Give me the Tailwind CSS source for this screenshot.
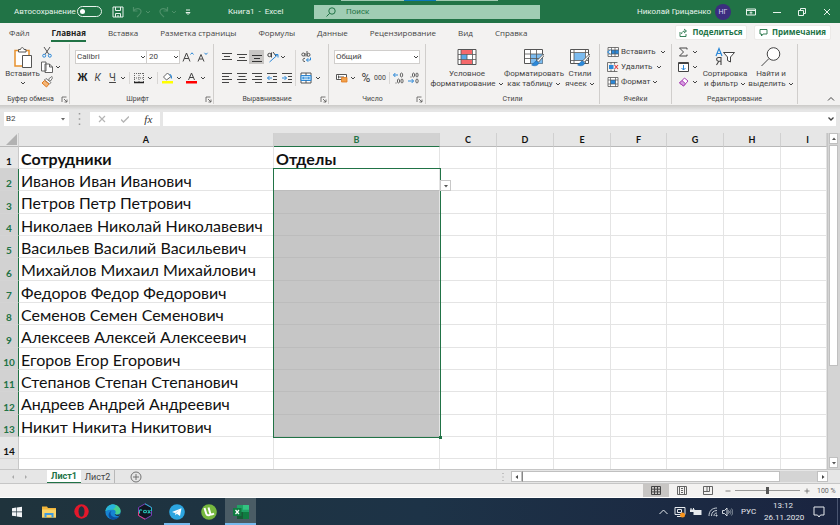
<!DOCTYPE html>
<html lang="ru">
<head>
<meta charset="utf-8">
<meta name="viewport" content="width=device-width, initial-scale=1">
<title>Книга1 - Excel</title>
<script src="https://cdn.jsdelivr.net/npm/@tailwindcss/browser@4"></script>
</head>
<body class="h-screen overflow-hidden flex flex-col bg-[#e6e6e6] font-['Roboto','Open_Sans',sans-serif] text-[8px] leading-[10px] text-[#444]">

<svg class="hidden">
  <symbol id="chev" viewBox="0 0 6 6"><path d="M1 2l2 2 2-2" fill="none" stroke="currentColor" stroke-width="1"/></symbol>
  <symbol id="launch" viewBox="0 0 7 7"><path d="M1 6V1h4.500M3 3l3 3M6 3.500V6H3.500" fill="none" stroke="#555" stroke-width=".8"/></symbol>
  <symbol id="brush" viewBox="0 0 12 12"><path d="M11.500 .5L5.500 6.500l1.500 1.500 5-6z" fill="#fff" stroke="#555" stroke-width=".8"/><path d="M5 7c-2 0-2 2.500-4.500 3.500C3 12 7 11.500 7 8.500z" fill="#2b88d8" stroke="#1e6bb0" stroke-width=".5"/></symbol>
</svg>

<!-- Title bar -->
<header class="relative h-[23px] shrink-0 flex items-center bg-[#217346] text-[#e8f3ec]">
  <div class="absolute top-0 left-[341px] w-[157px] h-px bg-[#9fc9b1]"><div class="ml-[63px] w-8 h-px bg-[#0a78b8]"></div></div>
  <label for="autosave" class="ml-[14px] w-[63px] text-[8px] whitespace-nowrap">Автосохранение</label>
  <input id="autosave" type="checkbox" class="peer sr-only">
  <label for="autosave" aria-hidden="true" class="w-[25px] h-[11px] rounded-full border border-[#e8f3ec] flex items-center pl-[2px]"><span class="size-[5px] rounded-full bg-white"></span></label>
  <button aria-label="Сохранить" class="ml-[10px] size-3"><svg viewBox="0 0 12 12" class="size-3" fill="none" stroke="#e8f3ec"><path d="M1 1h10v10H1zM3.500 1v3.500h5V1M3.500 11V7.500h5V11M6 9v2"/></svg></button>
  <button aria-label="Отменить" class="ml-2 w-3 h-3 text-[#4d9069]"><svg viewBox="0 0 12 12" class="size-3" fill="none" stroke="currentColor" stroke-width="1.200"><path d="M1.500 1v4h4M1.500 5c2-3.500 8-3 7.500 1-.2 2-2 3-4 5"/></svg></button>
  <svg class="ml-px size-[6px] text-[#4d9069]"><use href="#chev"/></svg>
  <button aria-label="Вернуть" class="ml-[6px] w-3 h-3 text-[#4d9069]"><svg viewBox="0 0 12 12" class="size-3" fill="none" stroke="currentColor" stroke-width="1.200"><path d="M10.500 1v4h-4M10.500 5c-2-3.500-8-3-7.500 1 .2 2 2 3 4 5"/></svg></button>
  <svg class="ml-[2px] size-[6px] text-[#4d9069]"><use href="#chev"/></svg>
  <button aria-label="Настройка панели" class="ml-[8px] w-[6px] h-[8px]"><svg viewBox="0 0 6 8" class="w-[6px] h-[8px]" fill="none" stroke="#e8f3ec"><path d="M1 2h4M1 4.500l2 2 2-2z"/></svg></button>
  <h1 class="ml-[37px] w-[86px] whitespace-nowrap">Книга1&nbsp; -&nbsp; Excel</h1>
  <div class="w-[226px] h-[14px] bg-[#a0cdb4] flex items-center pl-3 text-[#217346]">
    <svg viewBox="0 0 10 10" class="size-[10px]" fill="none" stroke="#217346"><circle cx="6" cy="4" r="3.200"/><path d="M3.700 6.300L.5 9.500"/></svg>
    <input aria-label="Поиск" placeholder="Поиск" class="ml-[10px] w-40 bg-transparent outline-none text-[8px] placeholder:text-[#217346]">
  </div>
  <span class="ml-auto w-[78px] whitespace-nowrap">Николай Грицаенко</span>
  <span class="size-4 rounded-full bg-[#3b2e7e] text-[#d8d4f0] text-[7px] grid place-items-center">НГ</span>
  <button aria-label="Параметры ленты" class="ml-[15px]"><svg viewBox="0 0 10 8" class="w-[10px] h-2" fill="none" stroke="#e8f3ec"><path d="M.5 1h9v6h-9zM.5 2.500h9M5 6.500V4M3.500 5.200L5 3.700l1.500 1.500"/></svg></button>
  <button aria-label="Свернуть" class="ml-[17px]"><svg viewBox="0 0 8 8" class="size-2" stroke="#e8f3ec"><path d="M0 4.500h8"/></svg></button>
  <button aria-label="Свернуть в окно" class="ml-[17px]"><svg viewBox="0 0 8 8" class="size-2" fill="none" stroke="#e8f3ec"><path d="M.5 2.500h5v5h-5zM2.500 2V.5h5v5H6"/></svg></button>
  <button aria-label="Закрыть" class="ml-[17px] mr-[9px]"><svg viewBox="0 0 8 8" class="size-2" stroke="#e8f3ec"><path d="M1 1l6 6M7 1L1 7"/></svg></button>
</header>

<!-- Ribbon tabs -->
<nav class="h-5 shrink-0 flex items-center gap-[22px] pl-[9px] bg-[#f3f2f1] font-['Open_Sans','Noto_Sans',sans-serif] text-[8px] leading-[12px] whitespace-nowrap">
  <a href="#">Файл</a>
  <a href="#" class="font-bold text-[#222] h-[17px] pt-[2px] border-b-2 border-[#217346]">Главная</a>
  <a href="#">Вставка</a>
  <a href="#">Разметка страницы</a>
  <a href="#">Формулы</a>
  <a href="#">Данные</a>
  <a href="#">Рецензирование</a>
  <a href="#">Вид</a>
  <a href="#">Справка</a>
  <div class="ml-auto mr-[9px] -mt-[2px] flex gap-[7px] font-bold text-[#217346]">
    <button class="h-[15px] w-[72px] bg-white rounded-xs flex items-center justify-center gap-1 border border-[#eceae8]"><svg viewBox="0 0 9 9" class="size-[9px]" fill="none" stroke="#217346" stroke-width=".9"><path d="M1 4v4.500h6V6M2.500 6c.3-2.500 2-3 4-3M5 1l2.500 2L5 5"/></svg>Поделиться</button>
    <button class="h-[15px] w-[77px] bg-white rounded-xs flex items-center justify-center gap-1 border border-[#eceae8]"><svg viewBox="0 0 9 9" class="size-[9px]" fill="none" stroke="#217346" stroke-width=".9"><path d="M1 1.500h7v4.500H4L2.500 8V6H1z"/></svg>Примечания</button>
  </div>
</nav>

<!-- Ribbon -->
<div class="h-[62px] shrink-0 flex bg-[#f3f2f1] pt-px pb-[1px] whitespace-nowrap">
  <section class="w-[70px] border-r border-[#d0cecc] flex flex-col">
    <div class="flex h-[50px] pt-[3px] pl-[6px]">
      <button class="w-[33px] flex flex-col items-center">
        <svg viewBox="0 0 20 22" class="w-5 h-[22px] shrink-0" fill="none"><path d="M2 3.500h14v15.500H2z" fill="#fff" stroke="#e8912d" stroke-width="1.500"/><path d="M5.500 5V2.500h2C8 0 10.500 0 11 2.500h2V5z" fill="#fff" stroke="#555"/><path d="M9.500 8.500h9v12h-9z" fill="#fff" stroke="#555"/></svg>
        <span>Вставить</span>
        <svg class="size-[6px] mt-px"><use href="#chev"/></svg>
      </button>
      <div class="ml-[2px] flex flex-col gap-[3px]">
        <button aria-label="Вырезать" class="h-[11px] w-3"><svg viewBox="0 0 12 11" class="w-3 h-[11px]" fill="none"><path d="M3 0l5 7.500M9 0L4 7.500" stroke="#555"/><circle cx="3.200" cy="8.700" r="1.500" stroke="#2b88d8"/><circle cx="8.800" cy="8.700" r="1.500" stroke="#2b88d8"/></svg></button>
        <button aria-label="Копировать" class="h-[12px] flex items-center gap-[2px]"><svg viewBox="0 0 12 12" class="size-3" fill="#fff" stroke="#555" stroke-width=".9"><path d="M.5 1H5v9H.5zM4 3h4.500l3 3v5.500H4zM8.500 3v3h3"/></svg><svg class="size-[6px]"><use href="#chev"/></svg></button>
        <button aria-label="Формат по образцу" class="h-3 w-3"><svg viewBox="0 0 12 12" class="size-3"><path d="M7.500 3L11 .5l.8 1L9.500 5z" fill="#fff" stroke="#555" stroke-width=".8"/><path d="M5 2.500l5 4-1.500 1.500-5-4z" fill="#fff" stroke="#555" stroke-width=".8"/><path d="M3.500 4.500L1 7l4.500 4L8 8z" fill="#f4b678" stroke="#e07a1f"/></svg></button>
      </div>
    </div>
    <div class="flex items-center mt-[1px] text-[7px]"><span class="flex-1 text-center">Буфер обмена</span><svg class="size-[7px] mr-px"><use href="#launch"/></svg></div>
  </section>

  <section class="w-[144px] border-r border-[#d0cecc] flex flex-col">
    <div class="h-[50px] pt-[6px] pl-[5px]">
      <div class="flex items-center h-[14px] text-[#444]">
        <div class="relative"><select aria-label="Шрифт" class="appearance-none block w-[72px] h-[14px] bg-white border border-[#d0cecc] pl-px text-[8px]"><option>Calibri</option></select><svg class="absolute right-px top-1 size-[6px] pointer-events-none"><use href="#chev"/></svg></div>
        <div class="relative -ml-px"><select aria-label="Размер шрифта" class="appearance-none block w-[34px] h-[14px] bg-white border border-[#d0cecc] pl-[2px] text-[8px]"><option>20</option></select><svg class="absolute right-px top-1 size-[6px] pointer-events-none"><use href="#chev"/></svg></div>
        <button aria-label="Увеличить размер" class="ml-[2px] w-[13px] h-3"><svg viewBox="0 0 13 12" class="w-[13px] h-3" fill="none"><path d="M1 10.500L4.500 2 8 10.500M2.300 7.500h4.500" stroke="#444"/><path d="M8.500 3.500l1.500-1.700 1.500 1.700" stroke="#2b88d8"/></svg></button>
        <button aria-label="Уменьшить размер" class="ml-[2px] w-[13px] h-3"><svg viewBox="0 0 13 12" class="w-[13px] h-3" fill="none"><path d="M1 10.500L4 3.500l3 7M2.200 8h3.600" stroke="#444"/><path d="M7.500 1.800L9 3.500l1.500-1.700" stroke="#2b88d8"/></svg></button>
      </div>
      <div class="mt-[7px] flex items-center h-[14px] text-[10px]">
        <button class="w-[15px] font-bold text-[#222]">Ж</button>
        <button class="w-[15px] italic">К</button>
        <button class="w-[15px] underline">Ч</button>
        <svg class="size-[6px] mr-[3px]"><use href="#chev"/></svg>
        <span class="w-px h-3 bg-[#d8d6d4] mr-[3px]"></span>
        <button aria-label="Границы" class="w-[12px]"><svg viewBox="0 0 12 12" class="size-3" fill="none" stroke="#666"><path d="M1 1.500h10M1.500 1v9M10.500 1v9M6 1v9M1 6h10" stroke-dasharray="1 1"/><path d="M1 10.500h10" stroke="#222" stroke-width="1.500"/></svg></button>
        <svg class="size-[6px] ml-[2px]"><use href="#chev"/></svg>
        <span class="w-px h-3 bg-[#d8d6d4] mx-1"></span>
        <button aria-label="Цвет заливки" class="w-[11px]"><svg viewBox="0 0 11 12" class="w-[11px] h-3" fill="none"><path d="M5.500 1L1.500 5l3 3L9 4.500z" fill="#fff" stroke="#555" stroke-width=".9"/><path d="M7.500 2.500c2 0 2 2 2 4" stroke="#2b88d8" stroke-width="1.200"/><path d="M0 9h11v2.500H0z" fill="#ff0"/></svg></button>
        <svg class="size-[6px] ml-[3px] mr-[4px]"><use href="#chev"/></svg>
        <button aria-label="Цвет текста" class="w-[11px]"><svg viewBox="0 0 11 12" class="w-[11px] h-3" fill="none"><path d="M2.500 8L5.500 1l3 7M3.500 5.500h4" stroke="#444"/><path d="M0 9h11v2.500H0z" fill="red"/></svg></button>
        <svg class="size-[6px] ml-[3px]"><use href="#chev"/></svg>
      </div>
    </div>
    <div class="flex items-center mt-[1px] text-[7px]"><span class="flex-1 text-center">Шрифт</span><svg class="size-[7px] mr-px"><use href="#launch"/></svg></div>
  </section>

  <section class="w-[115px] border-r border-[#d0cecc] flex flex-col">
    <div class="h-[50px] pt-[6px] pl-[5px] flex">
      <div class="w-[77px] border-r border-[#d8d6d4] h-[36px]">
        <div class="flex items-center h-[14px]">
          <button aria-label="По верхнему краю" class="w-[15px] grid place-items-center"><svg viewBox="0 0 10 10" class="size-[10px]" stroke="#444"><path d="M0 1.500h10M2 4.500h6M0 7.500h10"/></svg></button>
          <button aria-label="По середине" class="w-[15px] grid place-items-center"><svg viewBox="0 0 10 10" class="size-[10px]" stroke="#444"><path d="M0 2.500h10M2 5.500h6M0 8.500h10"/></svg></button>
          <button aria-label="По нижнему краю" class="w-[15px] h-[14px] bg-[#c8c6c4] grid place-items-center"><svg viewBox="0 0 10 10" class="size-[10px]" stroke="#333"><path d="M0 3.500h10M2 6.500h6M0 9.500h10"/></svg></button>
          <button aria-label="Ориентация" class="ml-[3px] w-3"><svg viewBox="0 0 12 12" class="size-3" fill="none"><circle cx="2.500" cy="4" r="1.700" stroke="#444"/><path d="M4.500 1.500v5M6 1l3 4" stroke="#444"/><path d="M2.500 11L11 3.500M7.800 3.500H11v3" stroke="#2b88d8"/></svg></button>
          <svg class="size-[6px] ml-px"><use href="#chev"/></svg>
        </div>
        <div class="mt-[7px] flex items-center h-[14px]">
          <button aria-label="По левому краю" class="w-[15px] grid place-items-center"><svg viewBox="0 0 10 10" class="size-[10px]" stroke="#444"><path d="M0 .5h10M0 3.500h7M0 6.500h10M0 9.500h7"/></svg></button>
          <button aria-label="По центру" class="w-[15px] grid place-items-center"><svg viewBox="0 0 10 10" class="size-[10px]" stroke="#444"><path d="M0 .5h10M1.500 3.500h7M0 6.500h10M1.500 9.500h7"/></svg></button>
          <button aria-label="По правому краю" class="w-[15px] grid place-items-center"><svg viewBox="0 0 10 10" class="size-[10px]" stroke="#444"><path d="M0 .5h10M3 3.500h7M0 6.500h10M3 9.500h7"/></svg></button>
          <button aria-label="Уменьшить отступ" class="w-[15px] grid place-items-center"><svg viewBox="0 0 10 10" class="size-[10px]" fill="none" stroke="#444"><path d="M0 .5h10M6 3.500h4M6 6.500h4M0 9.500h10"/><path d="M5 5H.5M2.500 3l-2 2 2 2" stroke="#2b88d8"/></svg></button>
          <button aria-label="Увеличить отступ" class="w-[15px] grid place-items-center"><svg viewBox="0 0 10 10" class="size-[10px]" fill="none" stroke="#444"><path d="M0 .5h10M6 3.500h4M6 6.500h4M0 9.500h10"/><path d="M0 5h4.500M2.500 3l2 2-2 2" stroke="#2b88d8"/></svg></button>
        </div>
      </div>
      <div class="pl-1">
        <button aria-label="Переносить текст" class="flex items-center h-[14px] pl-px"><svg viewBox="0 0 11 12" class="w-[11px] h-3" fill="none"><circle cx="2.300" cy="3.500" r="1.500" stroke="#555"/><path d="M4 2v3.500M6 0v5.500" stroke="#555"/><circle cx="7.500" cy="3.800" r="1.500" stroke="#555"/><path d="M4 7.500C1.500 6.500 1 11 4 10.500" stroke="#555"/><path d="M9.500 6.500v2.500H5.500M7.200 7.200L5.500 9l1.700 1.800" stroke="#2b88d8"/></svg></button>
        <button aria-label="Объединить" class="mt-[7px] flex items-center h-[14px] gap-[3px]"><svg viewBox="0 0 12 12" class="size-3" fill="none"><path d="M1 1h10v10H1z" fill="#fff" stroke="#555"/><path d="M1 3.500h10v5H1z" fill="#bfe0f8" stroke="#2b88d8"/><path d="M6 1v2.500M6 8.500V11" stroke="#555"/><path d="M2.500 6h7M4 5L2.500 6 4 7M8 5l1.500 1L8 7" stroke="#2b88d8" stroke-width=".8"/></svg><svg class="size-[6px]"><use href="#chev"/></svg></button>
      </div>
    </div>
    <div class="flex items-center mt-[1px] text-[7px]"><span class="flex-1 text-center">Выравнивание</span><svg class="size-[7px] mr-px"><use href="#launch"/></svg></div>
  </section>

  <section class="w-[97px] border-r border-[#d0cecc] flex flex-col">
    <div class="h-[50px] pt-[6px] pl-[5px]">
      <div class="relative w-[86px]"><select aria-label="Числовой формат" class="appearance-none block w-full h-[14px] bg-white border border-[#d0cecc] pl-px text-[8px]"><option>Общий</option></select><svg class="absolute right-px top-1 size-[6px] pointer-events-none"><use href="#chev"/></svg></div>
      <div class="mt-[7px] flex items-center h-[14px]">
        <button aria-label="Денежный формат" class="ml-[2px]"><svg viewBox="0 0 12 10" class="w-3 h-[10px]" fill="none"><path d="M.5 1.500h10v5H.5z" fill="#fff" stroke="#555"/><path d="M3 4h5M2.500 2.500v3" stroke="#555"/><path d="M5.500 4.500h5.500v4.500H5.500z" fill="#f0a04b" stroke="#e07a1f" stroke-width=".8"/></svg></button>
        <svg class="size-[6px] ml-[2px]"><use href="#chev"/></svg>
        <button class="ml-[4px] w-[12px] text-[12px]">%</button>
        <button class="ml-[2px] w-[12px] text-[7px]">000</button>
        <span class="w-px h-3 bg-[#d8d6d4] mx-[3px]"></span>
        <button aria-label="Увеличить разрядность" class="w-[11px]"><svg viewBox="0 0 11 12" class="w-[11px] h-3" fill="none"><path d="M5 3H.5M2.300 1L.5 3l1.800 2" stroke="#2b88d8"/><ellipse cx="8.500" cy="3" rx="1.200" ry="2" stroke="#555" stroke-width=".9"/><ellipse cx="5.500" cy="9" rx="1.100" ry="2" stroke="#555" stroke-width=".9"/><ellipse cx="9" cy="9" rx="1.100" ry="2" stroke="#555" stroke-width=".9"/><path d="M3 10.500v1" stroke="#555"/></svg></button>
        <button aria-label="Уменьшить разрядность" class="ml-1 w-[11px]"><svg viewBox="0 0 11 12" class="w-[11px] h-3" fill="none"><path d="M0 9h5.500M3.700 7l1.800 2-1.800 2" stroke="#2b88d8"/><ellipse cx="9" cy="9" rx="1.200" ry="2" stroke="#555" stroke-width=".9"/><ellipse cx="5.500" cy="3" rx="1.100" ry="2" stroke="#555" stroke-width=".9"/><ellipse cx="9" cy="3" rx="1.100" ry="2" stroke="#555" stroke-width=".9"/><path d="M3 4.500v1" stroke="#555"/></svg></button>
      </div>
    </div>
    <div class="flex items-center mt-[1px] text-[7px]"><span class="flex-1 text-center">Число</span><svg class="size-[7px] mr-[2px]"><use href="#launch"/></svg></div>
  </section>

  <section class="w-[174px] border-r border-[#d0cecc] flex flex-col">
    <div class="h-[50px] pt-[5px] pl-[4px] flex">
      <button class="w-[74px] flex flex-col items-center">
        <svg viewBox="0 0 20 16" class="w-5 h-4 mb-1" fill="none"><path d="M1 .5h18v15H1z" fill="#fff" stroke="#555"/><path d="M4 1h8v4H4zM4 11h11v4H4z" fill="#f5696b"/><path d="M4 5.500h6v5H4z" fill="#5aa9e6"/><path d="M12 1h3v4h-3z" fill="#f5696b"/><path d="M1 5.500h18M1 10.500h18M4 .5v15M15.500 .5v15M10 5v6" stroke="#555" stroke-width=".8"/></svg>
        <span>Условное</span><span class="flex items-center gap-[2px]">форматирование <svg class="size-[6px]"><use href="#chev"/></svg></span>
      </button>
      <button class="w-[60px] flex flex-col items-center">
        <svg viewBox="0 0 20 18" class="w-5 h-[18px] mb-[2px]" fill="none"><path d="M.5 .5h18v14H.5z" fill="#fff" stroke="#555"/><path d="M6.500 5h12v9.500h-12z" fill="#7cbcf0"/><path d="M.5 5h18M.5 9.500h18M6.500 .5v14M12.500 .5v14" stroke="#555" stroke-width=".8"/><svg x="7" y="4" width="13" height="14"><use href="#brush"/></svg></svg>
        <span>Форматировать</span><span class="flex items-center gap-[2px]">как таблицу <svg class="size-[6px]"><use href="#chev"/></svg></span>
      </button>
      <button class="w-[32px] flex flex-col items-center">
        <svg viewBox="0 0 20 18" class="w-5 h-[18px] mb-[2px]" fill="none"><path d="M.5 .5h18v14H.5z" fill="#fff" stroke="#555"/><path d="M4 4h11v7.500H4z" fill="#7cbcf0"/><path d="M.5 3.500h18M.5 11.500h18M4 .5v14M15.500 .5v14" stroke="#555" stroke-width=".8"/><svg x="7" y="4" width="13" height="14"><use href="#brush"/></svg></svg>
        <span>Стили</span><span class="flex items-center gap-[2px]">ячеек <svg class="size-[6px]"><use href="#chev"/></svg></span>
      </button>
    </div>
    <div class="mt-[1px] text-[7px] text-center">Стили</div>
  </section>

  <section class="w-[72px] border-r border-[#d0cecc] flex flex-col">
    <div class="h-[50px] pt-[2px] pl-[7px] flex flex-col gap-[3px]">
      <button class="h-3 flex items-center gap-[2px]"><svg viewBox="0 0 12 10" class="w-3 h-[10px]" fill="none"><path d="M1 .5h10.500v9H1z" fill="#fff" stroke="#555" stroke-width=".8"/><path d="M4 3h7.500v4H4z" fill="#2b88d8"/><path d="M1 3h10.500M1 7h10.500M4.500 .5v9M8 .5v9" stroke="#555" stroke-width=".7"/><path d="M3.500 3L.5 5l3 2" fill="#fff" stroke="#2b88d8"/></svg>Вставить<svg class="size-[6px] ml-[2px]"><use href="#chev"/></svg></button>
      <button class="h-3 flex items-center gap-[2px]"><svg viewBox="0 0 12 10" class="w-3 h-[10px]" fill="none"><path d="M.5 .5h10M.5 9.500h10M.5 .5v9M4 .5v2M7.500 .5v2M4 7.500v2M7.500 7.500v2" stroke="#555" stroke-width=".8"/><path d="M2 3h4.500v4H2z" fill="#2b88d8"/><path d="M7.500 3l3.500 4M11 3L7.500 7" stroke="#e03c3c" stroke-width="1.100"/></svg>Удалить<svg class="size-[6px] ml-[2px]"><use href="#chev"/></svg></button>
      <button class="h-3 flex items-center gap-[2px]"><svg viewBox="0 0 12 10" class="w-3 h-[10px]" fill="none"><path d="M1 .5h10v9H1z" fill="#fff" stroke="#555" stroke-width=".8"/><path d="M3.500 3h5v4h-5z" fill="#2b88d8"/><path d="M1 3h10M1 7h10M3.500 .5v9M8.500 .5v9" stroke="#555" stroke-width=".7"/></svg>Формат<svg class="size-[6px]"><use href="#chev"/></svg></button>
    </div>
    <div class="mt-[1px] text-[7px] text-center">Ячейки</div>
  </section>

  <section class="w-[126px] border-r border-[#d0cecc] flex flex-col">
    <div class="h-[50px] pt-[2px] pl-[6px] flex">
      <div class="w-[24px] flex flex-col gap-[3px]">
        <button aria-label="Сумма" class="h-3 flex items-center gap-[3px]"><svg viewBox="0 0 11 10" class="w-[11px] h-[10px]" fill="none" stroke="#444"><path d="M9 2.500V1H1.500l4 4-4 4H9V7.500"/></svg><svg class="size-[6px]"><use href="#chev"/></svg></button>
        <button aria-label="Заполнить" class="h-3 flex items-center gap-[3px]"><svg viewBox="0 0 11 10" class="w-[11px] h-[10px]" fill="none"><path d="M.5 .5h10v9H.5z" fill="#fff" stroke="#444"/><path d="M.5 1.500h10" stroke="#444"/><path d="M5.500 3v5M3.500 6l2 2 2-2" stroke="#2b88d8"/></svg><svg class="size-[6px]"><use href="#chev"/></svg></button>
        <button aria-label="Очистить" class="h-3 flex items-center gap-[3px]"><svg viewBox="0 0 11 10" class="w-[11px] h-[10px]" fill="none"><path d="M6.500 1L10 4 5.500 9 1.500 6z" fill="#fff" stroke="#a83fb5"/><path d="M4 3.500L7.500 6.700 5.500 9 1.500 6z" fill="#d69be0" stroke="#a83fb5"/></svg><svg class="size-[6px]"><use href="#chev"/></svg></button>
      </div>
      <button class="w-[46px] pt-px flex flex-col items-center">
        <svg viewBox="0 0 20 20" class="size-5 mb-[2px]" fill="none"><path d="M1 9L4 1.500 7 9M2 6.500h4" stroke="#2b88d8" stroke-width="1.200"/><path d="M6 18v-7.500H3.500c-2.500 0-2.500 3.700 0 3.700H6M3.800 14.200L1.500 18" stroke="#444" stroke-width="1.100"/><path d="M8.500 5.500h11l-4 4.500v5l-3-1.500V10z" stroke="#444" fill="#fff"/></svg>
        <span>Сортировка</span><span class="flex items-center gap-[2px]">и фильтр <svg class="size-[6px]"><use href="#chev"/></svg></span>
      </button>
      <button class="w-[46px] pt-px flex flex-col items-center">
        <svg viewBox="0 0 20 20" class="size-5 mb-[2px]" fill="none" stroke="#444"><circle cx="12.500" cy="7" r="6.300" fill="#fff"/><path d="M8 11.500L.5 19"/></svg>
        <span>Найти и</span><span class="flex items-center gap-[2px]">выделить <svg class="size-[6px]"><use href="#chev"/></svg></span>
      </button>
    </div>
    <div class="mt-[1px] text-[7px] text-center">Редактирование</div>
  </section>
  <button aria-label="Свернуть ленту" class="ml-auto mr-[5px] self-end mb-px"><svg viewBox="0 0 8 8" class="size-2" fill="none" stroke="#444"><path d="M1 5.500l3-3 3 3"/></svg></button>
</div>
<div class="h-[5px] shrink-0 bg-linear-to-b from-[#cbcac8] to-[#e6e6e6]"></div>

<!-- Formula bar -->
<div class="h-[23px] shrink-0 flex items-start pt-[2px] px-1">
  <div class="flex w-[65px] h-[14px] bg-white items-center pr-[3px]">
    <input aria-label="Имя" value="B2" class="w-0 flex-1 pl-[2px] outline-none text-[8px]">
    <svg viewBox="0 0 6 6" class="size-[6px]"><path d="M1 2h4L3 4.500z" fill="#666"/></svg>
  </div>
  <svg viewBox="0 0 2 8" class="mx-[9px] w-[3px] h-[14px]"><path d="M1 0v1M1 3.500v1M1 7v1" stroke="#999"/></svg>
  <div class="flex w-[70px] h-[14px] bg-white items-center justify-around">
    <button aria-label="Отмена" class="size-2"><svg viewBox="0 0 8 8" class="size-2" stroke="#b5b5b5" stroke-width="1.200"><path d="M1 1l6 6M7 1L1 7"/></svg></button>
    <button aria-label="Ввод" class="size-2"><svg viewBox="0 0 8 8" class="size-2" fill="none" stroke="#b5b5b5" stroke-width="1.400"><path d="M0 4.500l2.500 2.500L8 1.500"/></svg></button>
    <button class="font-['Liberation_Serif',serif] italic text-[11px] text-[#333]">fx</button>
  </div>
  <div class="ml-[3px] flex flex-1 h-[14px] bg-white items-center">
    <input aria-label="Строка формул" class="flex-1 outline-none px-1">
    <button aria-label="Развернуть строку формул" class="mr-[2px]"><svg viewBox="0 0 6 6" class="size-[6px]" fill="none" stroke="#444" stroke-width="1.300"><path d="M.5 1.500L3 4l2.500-2.500"/></svg></button>
  </div>
</div>

<!-- Sheet -->
<main class="flex-1 min-h-0 flex">
  <div class="relative flex-1 min-w-0 overflow-hidden border-r border-[#c4c4c4] bg-white">
    <table class="w-full table-fixed border-separate border-spacing-0 text-left text-[16px] leading-[18px] text-[#111] font-['Lato','Open_Sans',sans-serif] [&_tbody_tr]:h-[22px] [&_tbody_tr:nth-child(3n)]:h-[23px] [&_td]:border-r [&_td]:border-b [&_td]:border-[#e4e4e4] [&_td]:pl-[2px] [&_td]:pt-[2px] [&_td]:whitespace-nowrap [&_tbody_th]:text-[10px] [&_tbody_th]:leading-[12px] [&_tbody_th]:text-center [&_tbody_th]:align-bottom [&_tbody_th]:pb-px [&_tbody_th]:border-b [&_tbody_th]:border-b-[#d4d4d4] [&_tbody_th]:border-r">
      <colgroup><col class="w-[19px]"><col class="w-[255px]"><col class="w-[166px]"><col class="w-[57px]"><col class="w-[57px]"><col class="w-[57px]"><col class="w-[56px]"><col class="w-[57px]"><col class="w-[57px]"><col></colgroup>
      <thead>
        <tr class="h-[14px] bg-[#e6e6e6] text-[9px] leading-[12px] text-center [&>th]:font-bold [&>th]:border-b [&>th]:border-b-[#b8b8b8] [&>th]:border-r [&>th]:border-r-[#d0d0d0]">
          <th aria-label="Выделить всё"><svg viewBox="0 0 12 12" class="w-[11px] h-[11px] ml-auto mr-px block"><path d="M12 0v12H0z" fill="#b2b2b2"/></svg></th>
          <th scope="col">A</th><th scope="col" class="bg-[#d2d2d2] text-[#217346] border-b-[#217346]!">B</th><th scope="col">C</th><th scope="col">D</th><th scope="col">E</th><th scope="col">F</th><th scope="col">G</th><th scope="col">H</th><th scope="col" class="pl-2">I</th>
        </tr>
      </thead>
      <tbody class="[&_th]:font-bold [&_th]:bg-[#e6e6e6] [&_th]:border-r-[#c8c8c8] [&_.sel_th]:bg-[#d2d2d2] [&_.sel_th]:text-[#217346] [&_.sel_th]:border-r-[#217346] [&_.sel_td:nth-child(3)]:bg-[#c6c6c6] [&_.sel_td:nth-child(3)]:border-b-[#bcbcbc]">
        <tr class="font-bold"><th scope="row">1</th><td>Сотрудники</td><td>Отделы</td><td></td><td></td><td></td><td></td><td></td><td></td><td></td></tr>
        <tr class="sel"><th scope="row">2</th><td>Иванов Иван Иванович</td><td class="bg-white!"></td><td></td><td></td><td></td><td></td><td></td><td></td><td></td></tr>
        <tr class="sel"><th scope="row">3</th><td>Петров Петр Петрович</td><td></td><td></td><td></td><td></td><td></td><td></td><td></td><td></td></tr>
        <tr class="sel"><th scope="row">4</th><td>Николаев Николай Николавевич</td><td></td><td></td><td></td><td></td><td></td><td></td><td></td><td></td></tr>
        <tr class="sel"><th scope="row">5</th><td>Васильев Василий Васильевич</td><td></td><td></td><td></td><td></td><td></td><td></td><td></td><td></td></tr>
        <tr class="sel"><th scope="row">6</th><td>Михайлов Михаил Михайлович</td><td></td><td></td><td></td><td></td><td></td><td></td><td></td><td></td></tr>
        <tr class="sel"><th scope="row">7</th><td>Федоров Федор Федорович</td><td></td><td></td><td></td><td></td><td></td><td></td><td></td><td></td></tr>
        <tr class="sel"><th scope="row">8</th><td>Семенов Семен Семенович</td><td></td><td></td><td></td><td></td><td></td><td></td><td></td><td></td></tr>
        <tr class="sel"><th scope="row">9</th><td>Алексеев Алексей Алексеевич</td><td></td><td></td><td></td><td></td><td></td><td></td><td></td><td></td></tr>
        <tr class="sel"><th scope="row">10</th><td>Егоров Егор Егорович</td><td></td><td></td><td></td><td></td><td></td><td></td><td></td><td></td></tr>
        <tr class="sel"><th scope="row">11</th><td>Степанов Степан Степанович</td><td></td><td></td><td></td><td></td><td></td><td></td><td></td><td></td></tr>
        <tr class="sel"><th scope="row">12</th><td>Андреев Андрей Андреевич</td><td></td><td></td><td></td><td></td><td></td><td></td><td></td><td></td></tr>
        <tr class="sel"><th scope="row">13</th><td>Никит Никита Никитович</td><td></td><td></td><td></td><td></td><td></td><td></td><td></td><td></td></tr>
        <tr><th scope="row">14</th><td></td><td></td><td></td><td></td><td></td><td></td><td></td><td></td><td></td></tr>
        <tr><th scope="row"></th><td></td><td></td><td></td><td></td><td></td><td></td><td></td><td></td><td></td></tr>
      </tbody>
    </table>
    <!-- Selection frame B2:B13 with its list button -->
    <div class="absolute left-[273px] top-[35px] w-[168px] h-[270px] border border-[#217346] pointer-events-none">
      <span class="absolute -right-[2px] -bottom-[2px] size-[3px] bg-[#217346]"></span>
    </div>
    <button aria-label="Открыть список" class="absolute left-[440px] top-[47px] w-[11px] h-[11px] bg-white border border-[#c8c8c8] grid place-items-center"><svg viewBox="0 0 6 6" class="size-[6px]"><path d="M1 2h4L3 4.500z" fill="#555"/></svg></button>
  </div>
  <div class="w-3 shrink-0 flex flex-col bg-[#d4d4d4] px-px pr-[2px]">
    <button aria-label="Вверх" class="h-[11px] bg-white border border-[#c0c0c0] grid place-items-center"><svg viewBox="0 0 6 6" class="size-[6px]"><path d="M1 4h4L3 1.500z" fill="#555"/></svg></button>
    <div class="mt-px h-[221px] bg-white border border-[#c0c0c0]"></div>
    <button aria-label="Вниз" class="mt-auto mb-px h-[11px] bg-white border border-[#c0c0c0] grid place-items-center"><svg viewBox="0 0 6 6" class="size-[6px]"><path d="M1 2h4L3 4.500z" fill="#555"/></svg></button>
  </div>
</main>

<!-- Sheet tabs -->
<div class="h-[15px] shrink-0 flex items-center border-t border-b border-[#c6c6c6] bg-[#e6e6e6] text-[9px] leading-[12px]">
  <div class="w-[47px] shrink-0 flex gap-[7px] pl-[10px]">
    <svg viewBox="0 0 6 6" class="size-[6px]"><path d="M4 1v4L2 3z" fill="#aaa"/></svg>
    <svg viewBox="0 0 6 6" class="size-[6px]"><path d="M2 1v4l2-2z" fill="#aaa"/></svg>
  </div>
  <button class="w-[34px] shrink-0 h-[13px] bg-white font-bold text-[#217346] border-b border-[#217346]">Лист1</button>
  <button class="w-[34px] shrink-0 h-[13px] border-r border-[#b8b8b8]">Лист2</button>
  <button aria-label="Новый лист" class="ml-[15px]"><svg viewBox="0 0 12 12" class="size-3" fill="none" stroke="#666" stroke-width=".9"><circle cx="6" cy="6" r="5"/><path d="M6 3v6M3 6h6"/></svg></button>
  <svg viewBox="0 0 2 8" class="ml-auto mr-[7px] w-[2px] h-2"><path d="M1 0v1M1 3.500v1M1 7v1" stroke="#999"/></svg>
  <div class="w-[317px] h-[11px] flex bg-[#d4d4d4]">
    <button aria-label="Влево" class="w-[11px] bg-white border border-[#c0c0c0] grid place-items-center"><svg viewBox="0 0 6 6" class="size-[6px]"><path d="M4 1v4L1.500 3z" fill="#444"/></svg></button>
    <div class="w-[258px] bg-white border border-[#c0c0c0] border-l-[#888]"></div>
    <button aria-label="Вправо" class="ml-auto w-[11px] bg-white border border-[#c0c0c0] grid place-items-center"><svg viewBox="0 0 6 6" class="size-[6px]"><path d="M2 1v4l2.500-2z" fill="#444"/></svg></button>
  </div>
  <div class="w-3"></div>
</div>

<!-- Status bar -->
<div class="h-[14px] shrink-0 flex items-center justify-end bg-[#f3f2f1] border-b border-white text-[#666] text-[7px]">
  <button aria-label="Обычный" class="w-[26px] h-full bg-[#c8c6c4] grid place-items-center"><svg viewBox="0 0 10 9" class="w-[10px] h-[9px]" fill="none" stroke="#444"><path d="M.5 .5h9v8h-9zM.5 3.200h9M.5 5.900h9M3.500 .5v8M6.500 .5v8"/></svg></button>
  <button aria-label="Разметка" class="w-[26px] h-full grid place-items-center"><svg viewBox="0 0 10 9" class="w-[10px] h-[9px]" fill="none" stroke="#555" stroke-width=".9"><path d="M.5 .5h9v8h-9zM2.500 .5v8M7.500 .5v8M4 2.500h2M4 4.500h2M4 6.500h2"/></svg></button>
  <button aria-label="Страничный" class="w-[26px] h-full grid place-items-center"><svg viewBox="0 0 10 9" class="w-[10px] h-[9px]" fill="none" stroke="#555" stroke-width=".9"><path d="M.5 .5h9v8h-9zM4 .5v5h2.500v-5M.5 5.500h3.500"/></svg></button>
  <button aria-label="Мельче" class="ml-1 w-[10px]"><svg viewBox="0 0 6 6" class="size-[6px]" stroke="#666" stroke-width=".8"><path d="M.5 3h5"/></svg></button>
  <input aria-label="Масштаб" type="range" class="appearance-none w-[65px] h-[7px] bg-linear-to-b from-transparent from-40% via-[#999] via-50% to-transparent to-60% [&::-webkit-slider-thumb]:appearance-none [&::-webkit-slider-thumb]:w-[3px] [&::-webkit-slider-thumb]:h-[7px] [&::-webkit-slider-thumb]:bg-[#555]">
  <button aria-label="Крупнее" class="ml-[4px] w-[13px]"><svg viewBox="0 0 6 6" class="size-[6px]" stroke="#666" stroke-width=".8"><path d="M.5 3h5M3 .5v5"/></svg></button>
  <span class="w-[20px] mr-[3px] whitespace-nowrap">100 %</span>
</div>

<!-- Taskbar -->
<footer class="h-[27px] shrink-0 flex items-center pl-[2px] bg-linear-to-r from-[#1f333c] via-[#1d3347] to-[#1a2440] text-[#e6eaee]">
  <button aria-label="Пуск" class="w-[30px] h-full grid place-items-center"><svg viewBox="0 0 12 12" class="size-3" fill="#f2f4f6"><path d="M1 2.200l4.200-.6v4H1zM5.800 1.500l5.200-.8v4.900H5.800zM1 6.200h4.200v4L1 9.700zM5.800 6.200H11v5l-5.200-.8z"/></svg></button>
  <button aria-label="Проводник" class="w-[33px] h-full grid place-items-center"><svg viewBox="0 0 14 12" class="w-[14px] h-3"><path d="M0 .5h5l1 1.500h8v9.500H0z" fill="#f2b53a"/><path d="M0 3.500h14v8H0z" fill="#fbd468"/><path d="M2.500 11.500V7h9v4.500h-2V9h-5v2.500z" fill="#3f9be0"/></svg></button>
  <button aria-label="Opera" class="w-[32px] h-full grid place-items-center"><svg viewBox="0 0 15 15" class="size-[15px]"><circle cx="7.500" cy="7.500" r="7.200" fill="#e3182b"/><ellipse cx="7.500" cy="7.500" rx="3" ry="5.200" fill="#20333f"/></svg></button>
  <button aria-label="Edge" class="w-[32px] h-full grid place-items-center"><svg viewBox="0 0 16 16" class="size-4"><circle cx="8" cy="8" r="7.600" fill="#1683d2"/><path d="M.5 7C1.500 2 5 .3 8.500 .4c4.500.2 7.500 4 7.100 7.200-.4 2.700-3.500 3.600-5.600 2.400 1.500-2 .5-4.500-2.500-4.500C4.500 5.500 2 6 .5 7z" fill="#45cf8f"/><path d="M.5 7C1.500 2 5 .3 8.500 .4 12 .5 11 4 7.500 5.500 4.500 5.500 2 6 .5 7z" fill="#28b3dc"/><path d="M5.500 9c0 3 3.500 5.500 8.500 3.800-2.500 3.500-7.500 3.500-9.500 1C2.500 11.500 4 7.500 6.500 7c-.7.500-1 1.200-1 2z" fill="#0b4fa0"/><path d="M15.300 10c-1.500 1-4 1.200-5.300 0-.8.800.5 2 4 2.300z" fill="#20333f"/></svg></button>
  <button aria-label="Nox" class="w-[32px] h-full grid place-items-center"><svg viewBox="0 0 16 17" class="w-4 h-[17px]" fill="none"><path d="M8 .8l6.500 3.700v8L8 16.200l-6.500-3.700v-8z" fill="#101722" stroke="#7c3fb8"/><path d="M1.500 9v3.500L8 16.200" stroke="#e0417f"/><path d="M8 .8l6.500 3.700V8" stroke="#22b7c8"/><path d="M2.500 10.500V7.500c.5-.8 2-.8 2.500 0M6.500 8.500a1.500 1.300 0 1 0 3 0 1.500 1.300 0 1 0-3 0M10.700 7l2.800 3.300M13.500 7l-2.800 3.300" stroke="#25c0b5" stroke-width="1.100"/></svg></button>
  <button aria-label="Telegram" class="w-[26px] mx-[3px] h-full pt-[2px] border-b-2 border-[#76b9ed] grid place-items-center"><svg viewBox="0 0 16 16" class="size-4"><circle cx="8" cy="8" r="7.800" fill="#2ca5e0"/><path d="M3 8l9.500-3.800L11 12 7.800 9.800 6.500 11.200 6 9z" fill="#fff"/><path d="M6 9l4.500-3.200L7 9.500l-.5 1.700z" fill="#b9d8ea"/></svg></button>
  <button aria-label="uTorrent" class="w-[32px] h-full grid place-items-center"><svg viewBox="0 0 16 16" class="size-4"><circle cx="8" cy="8" r="7.800" fill="#76b83f"/><path d="M3.500 4l1.700 5.500c.5 2 3 2.500 4.200.8M7.500 3.500l1.600 5.500c.5 1.800 2.200 1.800 3.900.5" fill="none" stroke="#fff" stroke-width="2"/></svg></button>
  <button aria-label="Excel" class="w-[31px] h-full pt-[2px] bg-[#4a5c65] border-b-2 border-[#76b9ed] grid place-items-center"><svg viewBox="0 0 16 14" class="w-4 h-[14px]"><path d="M4 0h12v14H4z" fill="#21a366"/><path d="M10 0h6v4.700h-6z" fill="#33c481"/><path d="M4 7h6v7H4z" fill="#185c37"/><path d="M10 7h6v7h-6z" fill="#107c41"/><path d="M0 3h8.500v8H0z" fill="#107c41"/><path d="M2.500 5l3.500 4M6 5L2.500 9" stroke="#fff" stroke-width="1.200"/></svg></button>
  <div class="ml-auto flex items-center">
    <svg viewBox="0 0 9 8" class="w-[9px] h-2" fill="none" stroke="#e6eaee"><path d="M.5 6l4-4 4 4"/></svg>
    <svg viewBox="0 0 12 12" class="ml-[6px] size-3" fill="none" stroke="#e6eaee"><path d="M1 1.500h10v7H1zM3 10.500h4M3.500 6.500v-3h4v3z"/><circle cx="8.500" cy="9" r="2.500" fill="#f7941d" stroke="none"/></svg>
    <svg viewBox="0 0 12 9" class="ml-1 w-3 h-[9px]"><path d="M1 1v3M3.500 1v3" stroke="#e6eaee"/><path d="M0 2.500h5V5H0zM3.500 3h8v5h-8z" fill="#e6eaee"/></svg>
    <svg viewBox="0 0 10 10" class="ml-[6px] size-[10px]" fill="none" stroke="#c6ced6"><path d="M1 9C1 4 4 1 9 1M3.500 9C3.500 5.500 5.500 3.500 9 3.500M6 9c0-2 1-3 3-3"/><path d="M8 8h1v1H8z" fill="#fff"/></svg>
    <svg viewBox="0 0 11 10" class="ml-1 w-[11px] h-[10px]" fill="none" stroke="#e6eaee" stroke-width=".9"><path d="M.5 3.500h2L5 1v8L2.500 6.500h-2zM6.500 3.500c.8 1 .8 2 0 3"/><path d="M8 2.500c1.300 1.500 1.300 3.500 0 5M9.500 1.500c1.700 2 1.700 5 0 7" stroke="#8b96a3"/></svg>
    <span class="ml-2 w-[23px]">РУС</span>
    <time class="w-[38px] text-center leading-[12px] whitespace-nowrap">13:12<br>26.11.2020</time>
    <button aria-label="Уведомления" class="ml-[11px] mr-[12px]"><svg viewBox="0 0 12 12" class="size-3" fill="none" stroke="#e6eaee"><path d="M1 1h10v8H7.500L6 11 4.500 9H1z"/></svg></button>
    <span class="w-px h-[27px] bg-[#4a5570] mr-[2px]"></span>
  </div>
</footer>
</body>
</html>
